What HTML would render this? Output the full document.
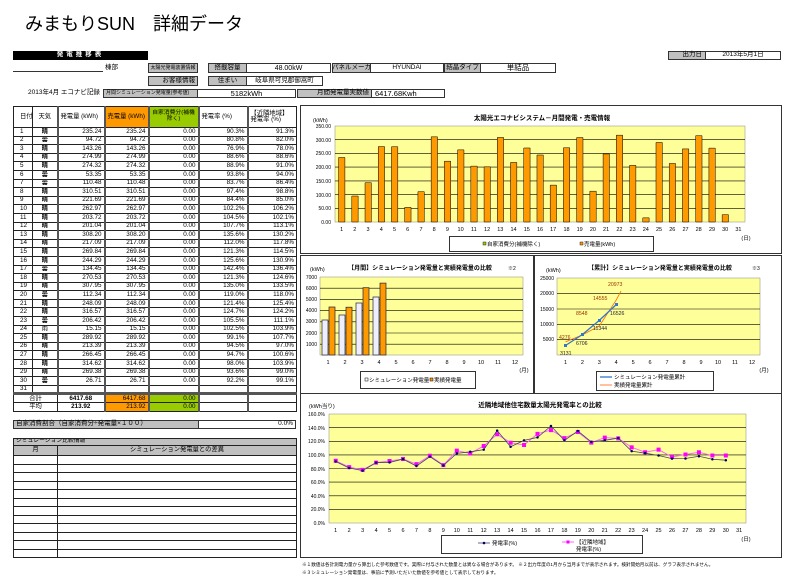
<!DOCTYPE html>
<html><head><meta charset="utf-8">
<style>
*{margin:0;padding:0;box-sizing:border-box}
body{width:785px;height:588px;background:#fff;position:relative;overflow:hidden;font-family:"Liberation Sans","Noto Sans CJK JP",sans-serif;color:#000}
.a{position:absolute;font-size:6.5px;line-height:1;white-space:nowrap}
.g{background:#c0c0c0;border:1px solid #333;display:flex;align-items:center;justify-content:center}
.w{background:#fff;border:1px solid #333;display:flex;align-items:center;justify-content:center}
table{border-collapse:collapse;table-layout:fixed;position:absolute}
td{border:1px solid #222;font-size:6.3px;line-height:1;padding:0 2px;white-space:nowrap;overflow:hidden}
#t td{height:8.6px}
#t td:nth-child(1){text-align:left;padding-left:6px}
#t td:nth-child(2){text-align:center;font-weight:bold}
#t td:nth-child(n+3){text-align:right}
#t td:nth-child(3),#t td:nth-child(4),#t td:nth-child(5),#t td:nth-child(6),#t td:nth-child(7){border-left:2px solid #555}
.or{background:#ff9900}.gr{background:#99cc00}
svg{position:absolute;left:0;top:0}
svg text{font-family:"Liberation Sans","Noto Sans CJK JP",sans-serif}
</style></head><body>
<div class="a" style="left:25px;top:15px;font-size:18px">みまもりSUN　詳細データ</div>
<div class="a" style="left:13px;top:51px;width:135px;height:9px;background:#000;color:#fff;font-weight:bold;letter-spacing:3px;display:flex;align-items:center;justify-content:center">発電推移表</div>
<div class="a" style="left:13px;top:71px;width:90px;border-top:1px solid #333"></div>
<div class="a" style="left:105px;top:65px">棟部</div>
<div class="a g" style="left:148px;top:63px;width:50px;height:10px;font-size:5px">太陽光発電装置情報</div>
<div class="a g" style="left:208px;top:63px;width:39px;height:10px">搭載容量</div>
<div class="a w" style="left:246px;top:63px;width:85px;height:10px;font-size:7px">48.00kW</div>
<div class="a g" style="left:332px;top:63px;width:39px;height:10px">パネルメーカ</div>
<div class="a w" style="left:370px;top:63px;width:74px;height:10px">HYUNDAI</div>
<div class="a g" style="left:444px;top:63px;width:37px;height:10px">結晶タイプ</div>
<div class="a w" style="left:480px;top:63px;width:76px;height:10px;font-size:7.5px">単結品</div>
<div class="a g" style="left:668px;top:51px;width:38px;height:9px;justify-content:flex-end;padding-right:3px">出力日</div>
<div class="a w" style="left:705px;top:51px;width:76px;height:9px">2013年5月1日</div>
<div class="a g" style="left:148px;top:76px;width:50px;height:10px;justify-content:flex-end;padding-right:2px">お客様情報</div>
<div class="a g" style="left:208px;top:76px;width:39px;height:10px">住まい</div>
<div class="a w" style="left:246px;top:76px;width:77px;height:10px">岐阜県可児郡御嵩町</div>
<div class="a" style="left:28px;top:90px">2013年4月 エコナビ記録</div>
<div class="a g" style="left:103px;top:89px;width:95px;height:9px;font-size:5px;justify-content:flex-start;padding-left:2px">月間シミュレーション発電量(参考値)</div>
<div class="a w" style="left:197px;top:89px;width:99px;height:9px;font-size:7.5px">5182kWh</div>
<div class="a g" style="left:297px;top:89px;width:75px;height:9px;justify-content:flex-end;padding-right:2px">月間発電量実数値</div>
<div class="a w" style="left:371px;top:89px;width:74px;height:9px;font-size:7.5px;justify-content:flex-start;padding-left:3px">6417.68Kwh</div>

<table id="t" style="left:13px;top:106px;width:283px">
<colgroup><col style="width:19px"><col style="width:25px"><col style="width:47px"><col style="width:44px"><col style="width:50px"><col style="width:49px"><col style="width:49px"></colgroup>
<tr style="height:21px"><td style="height:21px">日付</td><td style="font-weight:normal">天気</td><td style="text-align:left">発電量 (kWh)</td><td class="or" style="text-align:left">売電量 (kWh)</td><td class="gr" style="text-align:center;white-space:normal;font-size:5.8px">自家消費分(補機除く)</td><td style="text-align:left">発電率 (%)</td><td style="text-align:left;white-space:normal">【近隣地域】発電率 (%)</td></tr>
<tr><td>1</td><td>晴</td><td>235.24</td><td>235.24</td><td>0.00</td><td>90.3%</td><td>91.3%</td></tr>
<tr><td>2</td><td>曇</td><td>94.72</td><td>94.72</td><td>0.00</td><td>80.8%</td><td>82.0%</td></tr>
<tr><td>3</td><td>晴</td><td>143.26</td><td>143.26</td><td>0.00</td><td>76.9%</td><td>78.0%</td></tr>
<tr><td>4</td><td>晴</td><td>274.99</td><td>274.99</td><td>0.00</td><td>88.6%</td><td>88.6%</td></tr>
<tr><td>5</td><td>晴</td><td>274.32</td><td>274.32</td><td>0.00</td><td>88.9%</td><td>91.0%</td></tr>
<tr><td>6</td><td>曇</td><td>53.35</td><td>53.35</td><td>0.00</td><td>93.8%</td><td>94.0%</td></tr>
<tr><td>7</td><td>曇</td><td>110.48</td><td>110.48</td><td>0.00</td><td>83.7%</td><td>86.4%</td></tr>
<tr><td>8</td><td>晴</td><td>310.51</td><td>310.51</td><td>0.00</td><td>97.4%</td><td>98.8%</td></tr>
<tr><td>9</td><td>晴</td><td>221.69</td><td>221.69</td><td>0.00</td><td>84.4%</td><td>85.0%</td></tr>
<tr><td>10</td><td>晴</td><td>262.97</td><td>262.97</td><td>0.00</td><td>102.2%</td><td>106.2%</td></tr>
<tr><td>11</td><td>晴</td><td>203.72</td><td>203.72</td><td>0.00</td><td>104.5%</td><td>102.1%</td></tr>
<tr><td>12</td><td>晴</td><td>201.04</td><td>201.04</td><td>0.00</td><td>107.7%</td><td>113.1%</td></tr>
<tr><td>13</td><td>晴</td><td>308.20</td><td>308.20</td><td>0.00</td><td>135.6%</td><td>130.2%</td></tr>
<tr><td>14</td><td>晴</td><td>217.09</td><td>217.09</td><td>0.00</td><td>112.0%</td><td>117.8%</td></tr>
<tr><td>15</td><td>晴</td><td>269.84</td><td>269.84</td><td>0.00</td><td>121.3%</td><td>114.5%</td></tr>
<tr><td>16</td><td>晴</td><td>244.29</td><td>244.29</td><td>0.00</td><td>125.6%</td><td>130.9%</td></tr>
<tr><td>17</td><td>曇</td><td>134.45</td><td>134.45</td><td>0.00</td><td>142.4%</td><td>136.4%</td></tr>
<tr><td>18</td><td>晴</td><td>270.53</td><td>270.53</td><td>0.00</td><td>121.3%</td><td>124.6%</td></tr>
<tr><td>19</td><td>晴</td><td>307.95</td><td>307.95</td><td>0.00</td><td>135.0%</td><td>133.5%</td></tr>
<tr><td>20</td><td>曇</td><td>112.34</td><td>112.34</td><td>0.00</td><td>119.0%</td><td>118.0%</td></tr>
<tr><td>21</td><td>晴</td><td>248.09</td><td>248.09</td><td>0.00</td><td>121.4%</td><td>125.4%</td></tr>
<tr><td>22</td><td>晴</td><td>316.57</td><td>316.57</td><td>0.00</td><td>124.7%</td><td>124.2%</td></tr>
<tr><td>23</td><td>曇</td><td>206.42</td><td>206.42</td><td>0.00</td><td>105.5%</td><td>111.1%</td></tr>
<tr><td>24</td><td style="font-weight:normal">雨</td><td>15.15</td><td>15.15</td><td>0.00</td><td>102.5%</td><td>103.9%</td></tr>
<tr><td>25</td><td>晴</td><td>289.92</td><td>289.92</td><td>0.00</td><td>99.1%</td><td>107.7%</td></tr>
<tr><td>26</td><td>晴</td><td>213.39</td><td>213.39</td><td>0.00</td><td>94.5%</td><td>97.0%</td></tr>
<tr><td>27</td><td>晴</td><td>266.45</td><td>266.45</td><td>0.00</td><td>94.7%</td><td>100.6%</td></tr>
<tr><td>28</td><td>晴</td><td>314.62</td><td>314.62</td><td>0.00</td><td>98.0%</td><td>103.9%</td></tr>
<tr><td>29</td><td>晴</td><td>269.38</td><td>269.38</td><td>0.00</td><td>93.6%</td><td>99.0%</td></tr>
<tr><td>30</td><td>曇</td><td>26.71</td><td>26.71</td><td>0.00</td><td>92.2%</td><td>99.1%</td></tr>
<tr><td>31</td><td></td><td></td><td></td><td></td><td></td><td></td></tr>
<tr style="border-top:3px solid #555"><td colspan="2" style="text-align:center;padding:0">合計</td><td>6417.68</td><td class="or">6417.68</td><td class="gr">0.00</td><td></td><td></td></tr>
<tr><td colspan="2" style="text-align:center;padding:0">平均</td><td>213.92</td><td class="or">213.92</td><td class="gr">0.00</td><td></td><td></td></tr>
</table>

<div class="a g" style="left:13px;top:420px;width:186px;height:9px;justify-content:flex-start;padding-left:2px">自家消費割合（自家消費分÷発電量×１００）</div>
<div class="a w" style="left:198px;top:420px;width:98px;height:9px;justify-content:flex-end;padding-right:2px">0.0%</div>

<table style="left:13px;top:438px;width:283px">
<colgroup><col style="width:44px"><col style="width:239px"></colgroup>
<tr><td colspan="2" style="background:#c0c0c0;height:7px;font-size:5.8px">シミュレーション比較情報</td></tr>
<tr><td style="background:#c0c0c0;height:10px;text-align:center">月</td><td style="background:#c0c0c0;text-align:center">シミュレーション発電量との差異</td></tr>
<tr><td style="height:8.5px"></td><td></td></tr><tr><td style="height:8.5px"></td><td></td></tr><tr><td style="height:8.5px"></td><td></td></tr><tr><td style="height:8.5px"></td><td></td></tr><tr><td style="height:8.5px"></td><td></td></tr><tr><td style="height:8.5px"></td><td></td></tr><tr><td style="height:8.5px"></td><td></td></tr><tr><td style="height:8.5px"></td><td></td></tr><tr><td style="height:8.5px"></td><td></td></tr><tr><td style="height:8.5px"></td><td></td></tr><tr><td style="height:8.5px"></td><td></td></tr><tr><td style="height:8.5px"></td><td></td></tr>
</table>

<svg width="785" height="588" viewBox="0 0 785 588" font-size="6">
<rect x="300.5" y="105.5" width="481" height="148" fill="#fff" stroke="#333"/>
<text x="542" y="120" text-anchor="middle" font-size="6.5" font-weight="bold">太陽光エコナビシステム－月間発電・売電情報</text>
<text x="313" y="122" font-size="5.5">(kWh)</text>
<rect x="335" y="126" width="410" height="96" fill="#ffff99" stroke="#888" stroke-width=".5"/>
<g stroke="#000" stroke-width=".6">
<line x1="335" x2="745" y1="139.7" y2="139.7"/><line x1="335" x2="745" y1="153.4" y2="153.4"/><line x1="335" x2="745" y1="167.1" y2="167.1"/><line x1="335" x2="745" y1="180.9" y2="180.9"/><line x1="335" x2="745" y1="194.6" y2="194.6"/><line x1="335" x2="745" y1="208.3" y2="208.3"/></g>
<g font-size="5" text-anchor="end"><text x="331" y="128">350.00</text><text x="331" y="142">300.00</text><text x="331" y="155">250.00</text><text x="331" y="169">200.00</text><text x="331" y="183">150.00</text><text x="331" y="197">100.00</text><text x="331" y="210">50.00</text><text x="331" y="224">0.00</text></g>
<g transform="translate(335,222) scale(13.226,-0.27429)" fill="#ff9900" stroke="#000" stroke-width=".5">
<rect x="0.27" width="0.48" height="235.24" vector-effect="non-scaling-stroke"/><rect x="1.27" width="0.48" height="94.72" vector-effect="non-scaling-stroke"/><rect x="2.27" width="0.48" height="143.26" vector-effect="non-scaling-stroke"/><rect x="3.27" width="0.48" height="274.99" vector-effect="non-scaling-stroke"/><rect x="4.27" width="0.48" height="274.32" vector-effect="non-scaling-stroke"/><rect x="5.27" width="0.48" height="53.35" vector-effect="non-scaling-stroke"/><rect x="6.27" width="0.48" height="110.48" vector-effect="non-scaling-stroke"/><rect x="7.27" width="0.48" height="310.51" vector-effect="non-scaling-stroke"/><rect x="8.27" width="0.48" height="221.69" vector-effect="non-scaling-stroke"/><rect x="9.27" width="0.48" height="262.97" vector-effect="non-scaling-stroke"/><rect x="10.27" width="0.48" height="203.72" vector-effect="non-scaling-stroke"/><rect x="11.27" width="0.48" height="201.04" vector-effect="non-scaling-stroke"/><rect x="12.27" width="0.48" height="308.2" vector-effect="non-scaling-stroke"/><rect x="13.27" width="0.48" height="217.09" vector-effect="non-scaling-stroke"/><rect x="14.27" width="0.48" height="269.84" vector-effect="non-scaling-stroke"/><rect x="15.27" width="0.48" height="244.29" vector-effect="non-scaling-stroke"/><rect x="16.27" width="0.48" height="134.45" vector-effect="non-scaling-stroke"/><rect x="17.27" width="0.48" height="270.53" vector-effect="non-scaling-stroke"/><rect x="18.27" width="0.48" height="307.95" vector-effect="non-scaling-stroke"/><rect x="19.27" width="0.48" height="112.34" vector-effect="non-scaling-stroke"/><rect x="20.27" width="0.48" height="248.09" vector-effect="non-scaling-stroke"/><rect x="21.27" width="0.48" height="316.57" vector-effect="non-scaling-stroke"/><rect x="22.27" width="0.48" height="206.42" vector-effect="non-scaling-stroke"/><rect x="23.27" width="0.48" height="15.15" vector-effect="non-scaling-stroke"/><rect x="24.27" width="0.48" height="289.92" vector-effect="non-scaling-stroke"/><rect x="25.27" width="0.48" height="213.39" vector-effect="non-scaling-stroke"/><rect x="26.27" width="0.48" height="266.45" vector-effect="non-scaling-stroke"/><rect x="27.27" width="0.48" height="314.62" vector-effect="non-scaling-stroke"/><rect x="28.27" width="0.48" height="269.38" vector-effect="non-scaling-stroke"/><rect x="29.27" width="0.48" height="26.71" vector-effect="non-scaling-stroke"/>
</g>
<g font-size="5.5" text-anchor="middle"><text x="341.6" y="231">1</text><text x="354.8" y="231">2</text><text x="368" y="231">3</text><text x="381.3" y="231">4</text><text x="394.5" y="231">5</text><text x="407.7" y="231">6</text><text x="421" y="231">7</text><text x="434.2" y="231">8</text><text x="447.4" y="231">9</text><text x="460.6" y="231">10</text><text x="473.9" y="231">11</text><text x="487.1" y="231">12</text><text x="500.3" y="231">13</text><text x="513.5" y="231">14</text><text x="526.8" y="231">15</text><text x="540" y="231">16</text><text x="553.2" y="231">17</text><text x="566.5" y="231">18</text><text x="579.7" y="231">19</text><text x="592.9" y="231">20</text><text x="606.1" y="231">21</text><text x="619.4" y="231">22</text><text x="632.6" y="231">23</text><text x="645.8" y="231">24</text><text x="659" y="231">25</text><text x="672.3" y="231">26</text><text x="685.5" y="231">27</text><text x="698.7" y="231">28</text><text x="712" y="231">29</text><text x="725.2" y="231">30</text><text x="738.4" y="231">31</text><text x="746" y="240">(日)</text></g>
<rect x="449.5" y="236.5" width="204" height="15" fill="#fff" stroke="#333"/>
<rect x="483" y="242" width="3" height="3" fill="#99cc00" stroke="#000" stroke-width=".4"/><text x="487" y="246" font-size="5.5">自家消費分(補機除く)</text>
<rect x="580" y="242" width="3" height="3" fill="#ff9900" stroke="#000" stroke-width=".4"/><text x="584" y="246" font-size="5.5">売電量(kWh)</text>

<rect x="300.5" y="255.5" width="233" height="138" fill="#fff" stroke="#333"/>
<text x="420" y="270" text-anchor="middle" font-size="6" font-weight="bold">【月間】シミュレーション発電量と実績発電量の比較</text>
<text x="508" y="270" font-size="5">※2</text>
<text x="310" y="271" font-size="5.5">(kWh)</text>
<rect x="320" y="277" width="203" height="78" fill="#ffff99" stroke="#888" stroke-width=".5"/>
<g stroke="#000" stroke-width=".6"><line x1="320" x2="523" y1="288.2" y2="288.2"/><line x1="320" x2="523" y1="299.4" y2="299.4"/><line x1="320" x2="523" y1="310.6" y2="310.6"/><line x1="320" x2="523" y1="321.8" y2="321.8"/><line x1="320" x2="523" y1="333" y2="333"/><line x1="320" x2="523" y1="344.2" y2="344.2"/></g>
<g font-size="5" text-anchor="end"><text x="317" y="279">7000</text><text x="317" y="290">6000</text><text x="317" y="301">5000</text><text x="317" y="312">4000</text><text x="317" y="323">3000</text><text x="317" y="335">2000</text><text x="317" y="346">1000</text></g>
<g stroke="#223" stroke-width=".7">
<rect x="322" y="320" width="6" height="35" fill="#eef"/><rect x="339" y="315" width="6" height="40" fill="#eef"/><rect x="356" y="303" width="6" height="52" fill="#eef"/><rect x="373" y="297" width="6" height="58" fill="#eef"/>
<rect x="329" y="307" width="6" height="48" fill="#ff9900"/><rect x="346" y="307.2" width="6" height="47.8" fill="#ff9900"/><rect x="363" y="287.7" width="6" height="67.3" fill="#ff9900"/><rect x="380" y="283.1" width="6" height="71.9" fill="#ff9900"/></g>
<g font-size="5.5" text-anchor="middle"><text x="328" y="364">1</text><text x="345" y="364">2</text><text x="362" y="364">3</text><text x="379" y="364">4</text><text x="396" y="364">5</text><text x="413" y="364">6</text><text x="430" y="364">7</text><text x="447" y="364">8</text><text x="464" y="364">9</text><text x="481" y="364">10</text><text x="498" y="364">11</text><text x="515" y="364">12</text><text x="524" y="372">(月)</text></g>
<rect x="360.5" y="371.5" width="115" height="17" fill="#fff" stroke="#333"/>
<rect x="365" y="378" width="3" height="3" fill="#fff" stroke="#000" stroke-width=".5"/><text x="369" y="382" font-size="5.5">シミュレーション発電量</text>
<rect x="430" y="378" width="3" height="3" fill="#ff9900" stroke="#000" stroke-width=".5"/><text x="434" y="382" font-size="5.5">実績発電量</text>

<rect x="534.5" y="255.5" width="247" height="138" fill="#fff" stroke="#333"/>
<text x="660" y="270" text-anchor="middle" font-size="6" font-weight="bold">【累計】シミュレーション発電量と実績発電量の比較</text>
<text x="752" y="270" font-size="5">※3</text>
<text x="546" y="272" font-size="5.5">(kWh)</text>
<rect x="557" y="278" width="203" height="77" fill="#ffff99" stroke="#888" stroke-width=".5"/>
<g stroke="#000" stroke-width=".6"><line x1="557" x2="760" y1="293.6" y2="293.6"/><line x1="557" x2="760" y1="309" y2="309"/><line x1="557" x2="760" y1="324.3" y2="324.3"/><line x1="557" x2="760" y1="339.7" y2="339.7"/></g>
<g font-size="5" text-anchor="end"><text x="554" y="280">25000</text><text x="554" y="295">20000</text><text x="554" y="311">15000</text><text x="554" y="326">10000</text><text x="554" y="341">5000</text></g>
<polyline points="565.5,341.9 582.4,334.9 599.3,326 616.2,300.1 621,291" fill="none" stroke="#ff6600" stroke-width=".8"/>
<polyline points="565.5,345.5 582.4,334.5 599.3,320.4 616.2,304.6" fill="none" stroke="#3377cc" stroke-width="1.3"/>
<g fill="#3377cc"><rect x="564" y="344" width="3" height="3"/><rect x="581" y="333" width="3" height="3"/><rect x="598" y="319" width="3" height="3"/><rect x="615" y="303" width="3" height="3"/></g>
<g font-size="5.2" fill="#993300"><text x="559" y="339">4276</text><text x="576" y="315">8548</text><text x="593" y="300">14555</text><text x="608" y="286">20973</text></g>
<g font-size="5.2" fill="#223"><text x="560" y="355">3131</text><text x="576" y="345">6706</text><text x="593" y="330">11344</text><text x="610" y="315">16526</text></g>
<g font-size="5.5" text-anchor="middle"><text x="565.5" y="364">1</text><text x="582.4" y="364">2</text><text x="599.3" y="364">3</text><text x="616.2" y="364">4</text><text x="633.1" y="364">5</text><text x="650" y="364">6</text><text x="667" y="364">7</text><text x="684" y="364">8</text><text x="701" y="364">9</text><text x="718" y="364">10</text><text x="735" y="364">11</text><text x="752" y="364">12</text><text x="764" y="372">(月)</text></g>
<rect x="596.5" y="371.5" width="117" height="19" fill="#fff" stroke="#333"/>
<line x1="600" x2="612" y1="377" y2="377" stroke="#3377cc" stroke-width="1.3"/><text x="614" y="379" font-size="5.5">シミュレーション発電量累計</text>
<line x1="600" x2="612" y1="385" y2="385" stroke="#ff6600" stroke-width=".8"/><text x="614" y="387" font-size="5.5">実績発電量累計</text>

<rect x="300.5" y="393.5" width="481" height="164" fill="#fff" stroke="#333"/>
<text x="540" y="407" text-anchor="middle" font-size="6.5" font-weight="bold">近隣地域他住宅数量太陽光発電率との比較</text>
<text x="309" y="408" font-size="5.5">(kWh当り)</text>
<rect x="329" y="414" width="417" height="109" fill="#ffff99" stroke="#888" stroke-width=".5"/>
<g stroke="#000" stroke-width=".6"><line x1="329" x2="746" y1="427.6" y2="427.6"/><line x1="329" x2="746" y1="441.3" y2="441.3"/><line x1="329" x2="746" y1="454.9" y2="454.9"/><line x1="329" x2="746" y1="468.5" y2="468.5"/><line x1="329" x2="746" y1="482.1" y2="482.1"/><line x1="329" x2="746" y1="495.8" y2="495.8"/><line x1="329" x2="746" y1="509.4" y2="509.4"/></g>
<g font-size="5" text-anchor="end"><text x="325" y="416">160.0%</text><text x="325" y="430">140.0%</text><text x="325" y="443">120.0%</text><text x="325" y="457">100.0%</text><text x="325" y="471">80.0%</text><text x="325" y="484">60.0%</text><text x="325" y="498">40.0%</text><text x="325" y="511">20.0%</text><text x="325" y="525">0.0%</text></g>
<g transform="translate(329,523) scale(13.452,-0.68125)" fill="none">
<path d="M0.5 91.3L1.5 82L2.5 78L3.5 88.6L4.5 91L5.5 94L6.5 86.4L7.5 98.8L8.5 85L9.5 106.2L10.5 102.1L11.5 113.1L12.5 130.2L13.5 117.8L14.5 114.5L15.5 130.9L16.5 136.4L17.5 124.6L18.5 133.5L19.5 118L20.5 125.4L21.5 124.2L22.5 111.1L23.5 103.9L24.5 107.7L25.5 97L26.5 100.6L27.5 103.9L28.5 99L29.5 99.1" stroke="#ff66ff" stroke-width="1" vector-effect="non-scaling-stroke"/>
<path d="M0.5 91.3h0M1.5 82h0M2.5 78h0M3.5 88.6h0M4.5 91h0M5.5 94h0M6.5 86.4h0M7.5 98.8h0M8.5 85h0M9.5 106.2h0M10.5 102.1h0M11.5 113.1h0M12.5 130.2h0M13.5 117.8h0M14.5 114.5h0M15.5 130.9h0M16.5 136.4h0M17.5 124.6h0M18.5 133.5h0M19.5 118h0M20.5 125.4h0M21.5 124.2h0M22.5 111.1h0M23.5 103.9h0M24.5 107.7h0M25.5 97h0M26.5 100.6h0M27.5 103.9h0M28.5 99h0M29.5 99.1h0" stroke="#ff00ff" stroke-width="4" stroke-linecap="square" vector-effect="non-scaling-stroke"/>
<path d="M0.5 90.3L1.5 80.8L2.5 76.9L3.5 88.6L4.5 88.9L5.5 93.8L6.5 83.7L7.5 97.4L8.5 84.4L9.5 102.2L10.5 104.5L11.5 107.7L12.5 135.6L13.5 112L14.5 121.3L15.5 125.6L16.5 142.4L17.5 121.3L18.5 135L19.5 119L20.5 121.4L21.5 124.7L22.5 105.5L23.5 102.5L24.5 99.1L25.5 94.5L26.5 94.7L27.5 98L28.5 93.6L29.5 92.2" stroke="#444466" stroke-width=".8" vector-effect="non-scaling-stroke"/>
<path d="M0.5 90.3h0M1.5 80.8h0M2.5 76.9h0M3.5 88.6h0M4.5 88.9h0M5.5 93.8h0M6.5 83.7h0M7.5 97.4h0M8.5 84.4h0M9.5 102.2h0M10.5 104.5h0M11.5 107.7h0M12.5 135.6h0M13.5 112h0M14.5 121.3h0M15.5 125.6h0M16.5 142.4h0M17.5 121.3h0M18.5 135h0M19.5 119h0M20.5 121.4h0M21.5 124.7h0M22.5 105.5h0M23.5 102.5h0M24.5 99.1h0M25.5 94.5h0M26.5 94.7h0M27.5 98h0M28.5 93.6h0M29.5 92.2h0" stroke="#000066" stroke-width="2.5" stroke-linecap="round" vector-effect="non-scaling-stroke"/>
</g>
<g font-size="5.5" text-anchor="middle"><text x="335.7" y="532">1</text><text x="349.2" y="532">2</text><text x="362.6" y="532">3</text><text x="376.1" y="532">4</text><text x="389.5" y="532">5</text><text x="403" y="532">6</text><text x="416.4" y="532">7</text><text x="429.9" y="532">8</text><text x="443.3" y="532">9</text><text x="456.8" y="532">10</text><text x="470.2" y="532">11</text><text x="483.7" y="532">12</text><text x="497.1" y="532">13</text><text x="510.6" y="532">14</text><text x="524" y="532">15</text><text x="537.5" y="532">16</text><text x="550.9" y="532">17</text><text x="564.4" y="532">18</text><text x="577.8" y="532">19</text><text x="591.3" y="532">20</text><text x="604.7" y="532">21</text><text x="618.2" y="532">22</text><text x="631.6" y="532">23</text><text x="645.1" y="532">24</text><text x="658.5" y="532">25</text><text x="672" y="532">26</text><text x="685.4" y="532">27</text><text x="698.9" y="532">28</text><text x="712.3" y="532">29</text><text x="725.8" y="532">30</text><text x="739.2" y="532">31</text><text x="746" y="541">(日)</text></g>
<rect x="441.5" y="535.5" width="201" height="18" fill="#fff" stroke="#333"/>
<line x1="478" x2="490" y1="543" y2="543" stroke="#444466" stroke-width=".8"/><circle cx="484" cy="543" r="1.3" fill="#000066"/><text x="492" y="545" font-size="5.5">発電率(%)</text>
<line x1="562" x2="574" y1="542" y2="542" stroke="#ff66ff"/><rect x="566.5" y="540.5" width="3" height="3" fill="#ff00ff"/><text x="576" y="544" font-size="5.5">【近隣地域】</text><text x="576" y="551" font-size="5.5">発電率(%)</text>
<text x="302" y="566" font-size="4.6">※１数値は各計測電力量から算出した参考数値です。実際に付与された数量とは異なる場合があります。 ※２出力年度の1月から当月までが表示されます。検針開始月以前は、グラフ表示されません。</text>
<text x="302" y="574" font-size="4.6">※３シミュレーション発電量は、事前に予測いただいた数値を参考値として表示しております。</text>
</svg>
</body></html>
